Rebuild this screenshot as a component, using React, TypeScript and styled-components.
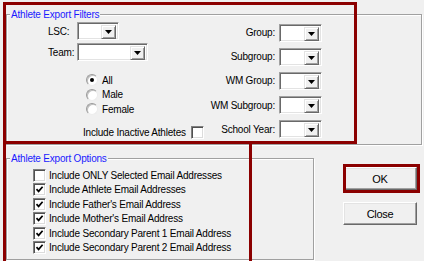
import React from "react";
import styled, { createGlobalStyle } from "styled-components";

const GlobalStyle = createGlobalStyle`
  body {
    margin: 0;
    background: #f0f0f0;
    font-family: "Liberation Sans", Arial, sans-serif;
    font-size: 10px;
    letter-spacing: -0.2px;
    color: #000;
  }
`;

const Dialog = styled.div`
  position: relative;
  box-sizing: border-box;
  width: 424px;
  height: 261px;
  padding: 14px 0 0 6px;
  overflow: hidden;
  background: #f0f0f0;
`;

const GroupBox = styled.div<{ $w: number; $h: number }>`
  position: relative;
  box-sizing: border-box;
  width: ${(p) => p.$w}px;
  height: ${(p) => p.$h}px;
  border: 1px solid #a0a0a0;
  box-shadow: inset 1px 1px 0 #fff, 1px 1px 0 #fff;
`;

const Legend = styled.span`
  position: absolute;
  top: -7px;
  left: 3px;
  padding: 0 1px;
  line-height: 13px;
  background: #f0f0f0;
  color: #1a1aff;
`;

const FilterBody = styled.div`
  display: flex;
  padding: 7px 0 0 41px;
`;

const LeftCol = styled.div`
  width: 163px;
  display: flex;
  flex-direction: column;
`;

const FieldGrid = styled.div<{ $cols: string }>`
  display: grid;
  grid-template-columns: ${(p) => p.$cols};
  column-gap: 4px;
  row-gap: 3px;
  align-items: center;
`;

const Label = styled.span<{ $right?: boolean }>`
  justify-self: ${(p) => (p.$right ? "end" : "start")};
  white-space: nowrap;
`;

const Combo = styled.div<{ $w: number }>`
  box-sizing: border-box;
  width: ${(p) => p.$w}px;
  height: 18px;
  padding: 1px;
  display: flex;
  justify-content: flex-end;
  background: #fff;
  border: 1px solid;
  border-color: #a0a0a0 #fff #fff #a0a0a0;
  box-shadow: inset 1px 1px 0 #696969, inset -1px -1px 0 #e3e3e3;
`;

const DropButton = styled.div`
  box-sizing: border-box;
  width: 15px;
  height: 14px;
  margin: 1px 1px 1px 0;
  display: flex;
  align-items: center;
  justify-content: center;
  background: #f0f0f0;
  border: 1px solid;
  border-color: #e3e3e3 #696969 #696969 #e3e3e3;
  box-shadow: inset 1px 1px 0 #fff, inset -1px -1px 0 #a0a0a0;
`;

const RadioList = styled.div`
  display: flex;
  flex-direction: column;
  margin: 12px 0 0 38px;
`;

const OptionRow = styled.label`
  display: flex;
  align-items: center;
  gap: 4px;
  height: 14.5px;
  white-space: nowrap;
`;

const RadioCircle = styled.span<{ $on?: boolean }>`
  box-sizing: border-box;
  width: 12px;
  height: 12px;
  border-radius: 50%;
  display: flex;
  align-items: center;
  justify-content: center;
  background: #fff;
  border: 1px solid;
  border-color: #9a9a9a #ececec #ececec #9a9a9a;
  box-shadow: inset 1px 1px 0 #c0c0c0;

  &::after {
    content: "";
    width: 4px;
    height: 4px;
    border-radius: 50%;
    background: ${(p) => (p.$on ? "#000" : "transparent")};
  }
`;

const InactiveRow = styled.label`
  display: flex;
  align-items: center;
  gap: 5px;
  height: 14.5px;
  margin: 9px 0 0 35px;
  white-space: nowrap;
`;

const Box = styled.span`
  box-sizing: border-box;
  width: 13px;
  height: 13px;
  flex: none;
  display: flex;
  align-items: center;
  justify-content: center;
  background: #fff;
  border: 1px solid;
  border-color: #808080 #fff #fff #808080;
  box-shadow: inset 1px 1px 0 #505050, inset -1px -1px 0 #dcdcdc;
`;

const OptionsBody = styled.div`
  display: flex;
  flex-direction: column;
  padding: 9px 0 0 26px;
`;

const CheckRow = styled.label`
  display: flex;
  align-items: center;
  gap: 3px;
  height: 14.5px;
  white-space: nowrap;
`;

const LowerRow = styled.div`
  display: flex;
  margin-top: 13px;
`;

const ButtonCol = styled.div`
  display: flex;
  flex-direction: column;
  gap: 12px;
  margin-left: 29px;
  padding-top: 9px;
`;

const PushButton = styled.button`
  box-sizing: border-box;
  width: 74px;
  height: 23px;
  padding: 0;
  background: #f0f0f0;
  border: 1px solid;
  border-color: #fff #696969 #696969 #fff;
  box-shadow: inset -1px -1px 0 #a0a0a0, inset 1px 1px 0 #e3e3e3;
  font-family: "Liberation Sans", Arial, sans-serif;
  font-size: 11px;
  letter-spacing: -0.3px;
  color: #000;
`;

const Highlight = styled.div<{ $x: number; $y: number; $w: number; $h: number }>`
  position: absolute;
  left: ${(p) => p.$x}px;
  top: ${(p) => p.$y}px;
  width: ${(p) => p.$w}px;
  height: ${(p) => p.$h}px;
  box-sizing: border-box;
  border: 3px solid #8b0000;
  pointer-events: none;
`;

function Arrow() {
  return (
    <svg width="7" height="4" viewBox="0 0 7 4">
      <polygon points="0,0 7,0 3.5,4" fill="#000" />
    </svg>
  );
}

function Tick() {
  return (
    <svg width="9" height="9" viewBox="0 0 9 9">
      <path d="M1.5 4.2 L3.6 6.4 L7.6 1.8" stroke="#000" strokeWidth="1.7" fill="none" />
    </svg>
  );
}

function Dropdown({ w }: { w: number }) {
  return (
    <Combo $w={w}>
      <DropButton>
        <Arrow />
      </DropButton>
    </Combo>
  );
}

const rightFields = ["Group:", "Subgroup:", "WM Group:", "WM Subgroup:", "School Year:"];

const emailOptions = [
  { text: "Include ONLY Selected Email Addresses", on: false },
  { text: "Include Athlete Email Addresses", on: true },
  { text: "Include Father's Email Address", on: true },
  { text: "Include Mother's Email Address", on: true },
  { text: "Include Secondary Parent 1 Email Address", on: true },
  { text: "Include Secondary Parent 2 Email Address", on: true },
];

export default function App() {
  return (
    <>
      <GlobalStyle />
      <Dialog>
        <GroupBox $w={416} $h={131}>
          <Legend>Athlete Export Filters</Legend>
          <FilterBody>
            <LeftCol>
              <FieldGrid $cols="25px auto">
                <Label>LSC:</Label>
                <Dropdown w={42} />
                <Label>Team:</Label>
                <Dropdown w={71} />
              </FieldGrid>
              <RadioList>
                {["All", "Male", "Female"].map((g, i) => (
                  <OptionRow key={g}>
                    <RadioCircle $on={i === 0} />
                    {g}
                  </OptionRow>
                ))}
              </RadioList>
              <InactiveRow>
                Include Inactive Athletes
                <Box />
              </InactiveRow>
            </LeftCol>
            <FieldGrid $cols="64px 43px">
              {rightFields.map((f) => (
                <React.Fragment key={f}>
                  <Label $right>{f}</Label>
                  <Dropdown w={43} />
                </React.Fragment>
              ))}
            </FieldGrid>
          </FilterBody>
        </GroupBox>

        <LowerRow>
          <GroupBox $w={308} $h={102}>
            <Legend>Athlete Export Options</Legend>
            <OptionsBody>
              {emailOptions.map((o) => (
                <CheckRow key={o.text}>
                  <Box>{o.on && <Tick />}</Box>
                  {o.text}
                </CheckRow>
              ))}
            </OptionsBody>
          </GroupBox>
          <ButtonCol>
            <PushButton>OK</PushButton>
            <PushButton>Close</PushButton>
          </ButtonCol>
        </LowerRow>

        <Highlight $x={3} $y={2} $w={354} $h={142} />
        <Highlight $x={3} $y={141} $w={249} $h={130} />
        <Highlight $x={343} $y={164} $w={77} $h={29} />
      </Dialog>
    </>
  );
}
